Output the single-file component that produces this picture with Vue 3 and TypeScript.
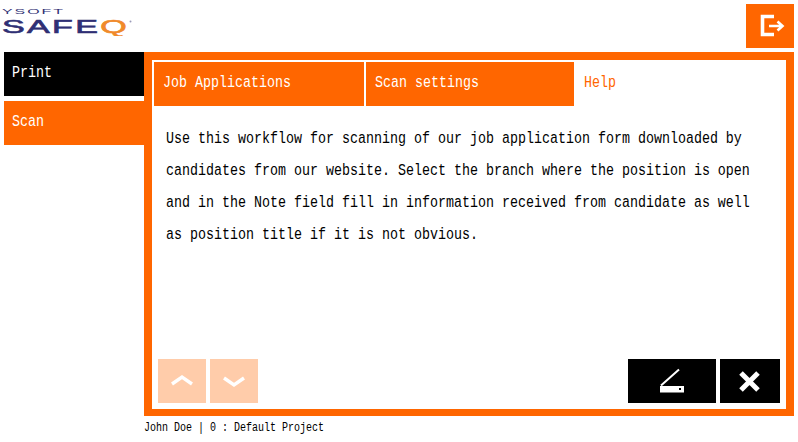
<script setup lang="ts">
const tabs: string[] = ['Job Applications', 'Scan settings']
const lines: string[] = [
  'Use this workflow for scanning of our job application form downloaded by',
  'candidates from our website. Select the branch where the position is open',
  'and in the Note field fill in information received from candidate as well',
  'as position title if it is not obvious.',
]
</script>

<template>
  <div class="app">
    <header class="top">
      <svg class="logo" width="134" height="36" viewBox="0 0 134 36">
        <text x="2" y="13.5" class="ysoft" textLength="63" lengthAdjust="spacingAndGlyphs">YSOFT</text>
        <text x="2" y="33" class="safeq" textLength="127" lengthAdjust="spacingAndGlyphs">SAFE<tspan fill="#f08a2a" stroke="#f08a2a">Q</tspan></text>
        <circle cx="130.5" cy="21.5" r="1" fill="#9a9ab8" />
      </svg>
      <button class="logout" aria-label="Log out">
        <svg width="48" height="44" viewBox="0 0 48 44">
          <path d="M28 12.5H16.5V30.5H28" fill="none" stroke="#fff" stroke-width="3.6" />
          <path d="M23 22H36M31.5 17.5L36.5 22L31.5 26.5" fill="none" stroke="#fff" stroke-width="2.6" />
        </svg>
      </button>
    </header>
    <div class="body">
      <nav class="side">
        <div class="side-item print"><span class="tall">Print</span></div>
        <div class="side-item scan"><span class="tall">Scan</span></div>
      </nav>
      <main class="panel">
        <div class="tabs">
          <div v-for="t in tabs" :key="t" class="tab"><span class="tall">{{ t }}</span></div>
          <div class="tab active"><span class="tall">Help</span></div>
        </div>
        <div class="help">
          <p v-for="l in lines" :key="l"><span class="tall">{{ l }}</span></p>
        </div>
        <div class="actions">
          <div class="group">
            <button class="btn pale" aria-label="Up">
              <svg width="48" height="44" viewBox="0 0 48 44"><path d="M14 25L24 18L34 25" fill="none" stroke="#fff" stroke-width="3.4" /></svg>
            </button>
            <button class="btn pale" aria-label="Down">
              <svg width="48" height="44" viewBox="0 0 48 44"><path d="M14 19L24 26L34 19" fill="none" stroke="#fff" stroke-width="3.4" /></svg>
            </button>
          </div>
          <div class="group">
            <button class="btn dark wide" aria-label="Scan">
              <svg width="88" height="44" viewBox="0 0 88 44">
                <path d="M33 26.5L51 10.5" fill="none" stroke="#fff" stroke-width="2" />
                <path fill-rule="evenodd" d="M32 27H56V33.5H32ZM51 29V31H53V29Z" fill="#fff" />
              </svg>
            </button>
            <button class="btn dark close" aria-label="Close">
              <svg width="60" height="44" viewBox="0 0 60 44"><path d="M21 14L38 31M38 14L21 31" fill="none" stroke="#fff" stroke-width="5" /></svg>
            </button>
          </div>
        </div>
      </main>
    </div>
    <footer class="foot"><span class="tall">John Doe | 0 : Default Project</span></footer>
  </div>
</template>

<style>
html, body { margin: 0; background: #fff; }
</style>

<style scoped>
.app {
  width: 798px;
  height: 442px;
  overflow: hidden;
  font-family: "Liberation Mono", "DejaVu Sans Mono", monospace;
  font-size: 13.33px;
  color: #000;
  background: #fff;
}
.tall { display: inline-block; transform: translateY(1px) scaleY(1.25); }
.foot .tall { transform: scaleY(1.25); }
.top {
  height: 48px;
  padding: 0 4px 4px 0;
  display: flex;
  justify-content: space-between;
  align-items: flex-end;
}
.logo { align-self: flex-start; }
.ysoft { font: 400 8px "Liberation Sans", sans-serif; letter-spacing: 1px; fill: #2f2f74; }
.safeq { font: 400 17.5px "Liberation Sans", sans-serif; letter-spacing: 1.2px; fill: #2f2f74; stroke: #2f2f74; stroke-width: 0.6px; }
.logout, .btn { border: 0; padding: 0; display: block; }
.logout { width: 48px; height: 44px; background: #f60; }
.logout svg, .btn svg { display: block; }
.body { display: flex; padding-left: 4px; }
.side { width: 140px; display: flex; flex-direction: column; gap: 5px; }
.side-item { height: 44px; line-height: 40px; padding-left: 8px; color: #fff; }
.print { background: #000; }
.scan { background: #f60; }
.panel {
  width: 634px;
  height: 349px;
  border: solid #f60;
  border-width: 8px 8px 7px;
  display: flex;
  flex-direction: column;
}
.tabs { display: flex; gap: 2px; padding: 2px 0 0 2px; }
.tab {
  width: 210px;
  height: 44px;
  line-height: 40px;
  padding-left: 9px;
  box-sizing: border-box;
  background: #f60;
  color: #fff;
}
.tab + .tab { width: 208px; }
.tab.active { background: #fff; color: #f60; margin-left: -1px; }
.help { flex: 1; padding: 16px 0 0 14px; }
.help p { margin: 0; height: 32px; line-height: 32px; white-space: nowrap; }
.actions {
  display: flex;
  justify-content: space-between;
  padding: 0 6px 6px;
}
.group { display: flex; gap: 4px; }
.btn { width: 48px; height: 44px; }
.pale { background: #fca; }
.dark { background: #000; }
.wide { width: 88px; }
.close { width: 60px; }
.foot { padding: 5px 0 0 144px; font-size: 10px; line-height: 13px; }
</style>
